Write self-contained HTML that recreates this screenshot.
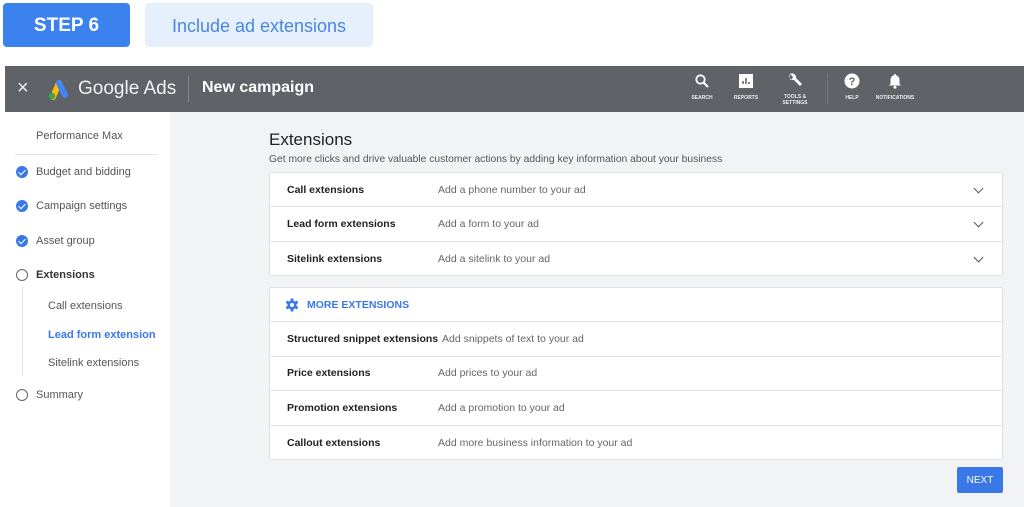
<!DOCTYPE html>
<html><head><style>
*{box-sizing:border-box;margin:0;padding:0}
body{width:1024px;height:507px;background:#fff;font-family:"Liberation Sans",Arial,sans-serif;position:relative;overflow:hidden}
.abs{position:absolute}
.step{left:3px;top:3px;width:127px;height:44px;background:#3b82ee;border-radius:4px;color:#fff;font-weight:bold;font-size:19px;display:flex;align-items:center;justify-content:center;padding-top:2px}
.inc{left:145px;top:3px;width:228px;height:44px;background:#e6effc;border-radius:4px;color:#4a86e0;font-size:18px;display:flex;align-items:center;justify-content:center;padding-top:2px}
.hdr{left:5px;top:66px;width:1019px;height:46px;background:#5f6368;color:#fff}
.side{left:5px;top:112px;width:165px;height:395px;background:#fff}
.main{left:170px;top:112px;width:854px;height:395px;background:#f1f3f4}
.card{left:269px;width:734px;background:#fff;border:1px solid #e0e0e0;border-radius:2px}
.row{height:34.4px;border-bottom:1px solid #e4e4e4;display:flex;align-items:center;font-size:10.5px;position:relative}
.row:last-child{border-bottom:none}
.row b{font-weight:bold;color:#222;padding-left:17px}
.row span{color:#666;position:absolute}
.chev{position:absolute;right:20px;top:12px;width:7px;height:7px;border-right:1.5px solid #555;border-bottom:1.5px solid #555;transform:rotate(45deg)}
.si{font-size:11px;color:#555;position:absolute}
.ck{position:absolute;left:11px;width:12px;height:12px;border-radius:50%;background:#3b78e7}
.ck:after{content:"";position:absolute;left:3.5px;top:2px;width:3px;height:6px;border-right:1.5px solid #fff;border-bottom:1.5px solid #fff;transform:rotate(45deg)}
.oc{position:absolute;left:11px;width:12px;height:12px;border-radius:50%;border:1.5px solid #666}
.ic{position:absolute;top:0;text-align:center;font-size:5px;font-weight:bold;color:#eee}
</style></head><body>
<div class="abs step">STEP 6</div>
<div class="abs inc">Include ad extensions</div>
<div class="abs hdr">
 <div class="abs" style="left:12px;top:11px;font-size:20px;color:#eee">×</div>
 <svg class="abs" style="left:40px;top:12px" width="24" height="22" viewBox="0 0 24 22"><path d="M8 19 L14 5" stroke="#fbbc04" stroke-width="6" stroke-linecap="round"/><path d="M14 5 L20 17" stroke="#4285f4" stroke-width="6" stroke-linecap="round"/><circle cx="7" cy="18" r="3.2" fill="#34a853"/></svg>
 <div class="abs" style="left:73px;top:12px;font-size:19px;color:#f1f1f1">Google Ads</div>
 <div class="abs" style="left:183px;top:10px;width:1px;height:26px;background:#888"></div>
 <div class="abs" style="left:197px;top:13px;font-size:16px;font-weight:bold;color:#fff">New campaign</div>
 <div class="ic" style="left:682px;width:30px"><svg width="16" height="16" style="margin-top:7px" viewBox="0 0 16 16"><circle cx="6.5" cy="6.5" r="4.2" stroke="#fff" stroke-width="1.8" fill="none"/><path d="M9.5 9.5L14 14" stroke="#fff" stroke-width="2"/></svg><div style="margin-top:4px">SEARCH</div></div>
 <div class="ic" style="left:723px;width:36px"><svg width="16" height="16" style="margin-top:7px" viewBox="0 0 16 16"><rect x="1" y="1" width="14" height="14" fill="#fff"/><path d="M5 11V8M8 11V5M11 11V9" stroke="#5f6368" stroke-width="1.5"/></svg><div style="margin-top:4px">REPORTS</div></div>
 <div class="ic" style="left:772px;width:36px"><svg width="18" height="18" style="margin-top:6px" viewBox="0 0 18 18"><path d="M4 2a4 4 0 0 0 4 6l6 6 2-2-6-6a4 4 0 0 0-6-4l3 3-1 2-2 1z" fill="#fff"/></svg><div style="margin-top:2px">TOOLS &amp;<br>SETTINGS</div></div>
 <div class="abs" style="left:822px;top:8px;width:1px;height:30px;background:#777"></div>
 <div class="ic" style="left:832px;width:30px"><svg width="16" height="16" style="margin-top:7px" viewBox="0 0 16 16"><circle cx="8" cy="8" r="7.5" fill="#fff"/><text x="8" y="12" font-size="11" font-weight="bold" text-anchor="middle" fill="#5f6368" font-family="Liberation Sans">?</text></svg><div style="margin-top:4px">HELP</div></div>
 <div class="ic" style="left:866px;width:48px"><svg width="14" height="16" style="margin-top:7px" viewBox="0 0 14 16"><path d="M7 1a1 1 0 0 1 1 1.2A4.5 4.5 0 0 1 11.5 7v4l1.5 1.5H1L2.5 11V7A4.5 4.5 0 0 1 6 2.2 1 1 0 0 1 7 1z" fill="#fff"/><circle cx="7" cy="14.3" r="1.5" fill="#fff"/></svg><div style="margin-top:4px">NOTIFICATIONS</div></div>
</div>
<div class="abs side">
 <div class="si" style="left:31px;top:18px">Performance Max</div>
 <div class="abs" style="left:10px;top:42px;width:143px;height:1px;background:#e4e4e4"></div>
 <div class="ck" style="top:54px"></div><div class="si" style="left:31px;top:54px">Budget and bidding</div>
 <div class="ck" style="top:88px"></div><div class="si" style="left:31px;top:88px">Campaign settings</div>
 <div class="ck" style="top:123px"></div><div class="si" style="left:31px;top:123px">Asset group</div>
 <div class="oc" style="top:157px"></div><div class="si" style="left:31px;top:157px;color:#333;font-weight:bold">Extensions</div>
 <div class="abs" style="left:17px;top:174px;width:1px;height:90px;background:#e4e4e4"></div>
 <div class="si" style="left:43px;top:188px">Call extensions</div>
 <div class="si" style="left:43px;top:217px;color:#3b78e7;font-weight:bold">Lead form extension</div>
 <div class="si" style="left:43px;top:245px">Sitelink extensions</div>
 <div class="oc" style="top:277px"></div><div class="si" style="left:31px;top:277px">Summary</div>
</div>
<div class="abs main"></div>
<div class="abs" style="left:269px;top:130px;font-size:17px;color:#222">Extensions</div>
<div class="abs" style="left:269px;top:154px;font-size:10.3px;color:#555">Get more clicks and drive valuable customer actions by adding key information about your business</div>
<div class="abs card" style="top:172px;height:104px">
 <div class="row"><b>Call extensions</b><span style="left:168px">Add a phone number to your ad</span><i class="chev"></i></div>
 <div class="row"><b>Lead form extensions</b><span style="left:168px">Add a form to your ad</span><i class="chev"></i></div>
 <div class="row"><b>Sitelink extensions</b><span style="left:168px">Add a sitelink to your ad</span><i class="chev"></i></div>
</div>
<div class="abs card" style="top:287px;height:173px">
 <div class="row"><svg style="margin-left:15px" width="14" height="14" viewBox="0 0 14 14"><g fill="#3b78e7"><circle cx="7" cy="7" r="4.6"/><rect x="5.6" y="0.5" width="2.8" height="13"/><rect x="5.6" y="0.5" width="2.8" height="13" transform="rotate(60 7 7)"/><rect x="5.6" y="0.5" width="2.8" height="13" transform="rotate(120 7 7)"/></g><circle cx="7" cy="7" r="2" fill="#fff"/></svg><span style="left:37px;color:#3b78e7;font-weight:bold">MORE EXTENSIONS</span></div>
 <div class="row"><b>Structured snippet extensions</b><span style="left:172px">Add snippets of text to your ad</span></div>
 <div class="row"><b>Price extensions</b><span style="left:168px">Add prices to your ad</span></div>
 <div class="row"><b>Promotion extensions</b><span style="left:168px">Add a promotion to your ad</span></div>
 <div class="row"><b>Callout extensions</b><span style="left:168px">Add more business information to your ad</span></div>
</div>
<div class="abs" style="left:957px;top:467px;width:46px;height:26px;background:#3b78e7;border-radius:2px;color:#fff;font-size:10px;display:flex;align-items:center;justify-content:center">NEXT</div>
</body></html>
